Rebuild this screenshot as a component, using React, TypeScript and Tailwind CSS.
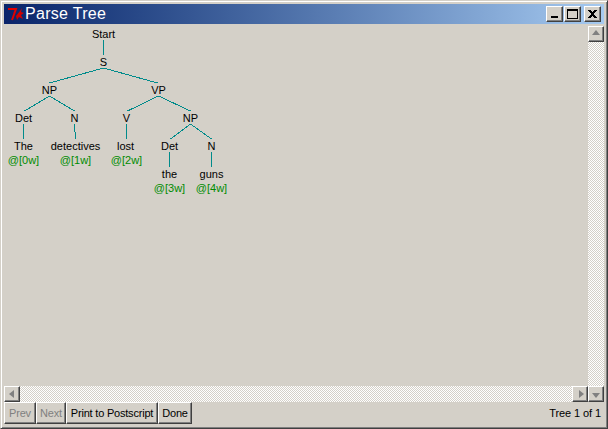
import type { ReactNode } from "react";

const words = [
  { label: "Start", x: 103, y: 34 },
  { label: "S", x: 103, y: 62 },
  { label: "NP", x: 49, y: 90 },
  { label: "VP", x: 158, y: 90 },
  { label: "Det", x: 23, y: 118 },
  { label: "N", x: 74, y: 118 },
  { label: "V", x: 126, y: 118 },
  { label: "NP", x: 190, y: 118 },
  { label: "The", x: 23, y: 146 },
  { label: "detectives", x: 75, y: 146 },
  { label: "lost", x: 125, y: 146 },
  { label: "Det", x: 169, y: 146 },
  { label: "N", x: 211, y: 146 },
  { label: "the", x: 169, y: 174 },
  { label: "guns", x: 211, y: 174 },
];

const positions = [
  { label: "@[0w]", x: 23, y: 160 },
  { label: "@[1w]", x: 75, y: 160 },
  { label: "@[2w]", x: 126, y: 160 },
  { label: "@[3w]", x: 169, y: 188 },
  { label: "@[4w]", x: 211, y: 188 },
];

const edges = [
  [103, 40, 103, 55],
  [103, 68, 49, 83],
  [103, 68, 157, 83],
  [49, 96, 24, 111],
  [49, 96, 74, 111],
  [158, 96, 127, 111],
  [158, 96, 190, 111],
  [23, 124, 23, 139],
  [74, 124, 75, 139],
  [126, 124, 126, 139],
  [190, 124, 170, 139],
  [190, 124, 211, 139],
  [169, 152, 169, 167],
  [211, 152, 211, 167],
];

const raised =
  "border border-t-white border-l-white border-r-[#404040] border-b-[#404040] bg-[#d4d0c8] shadow-[inset_-1px_-1px_0_#808080]";

const checker =
  "bg-[repeating-conic-gradient(#ffffff_0_25%,#d4d0c8_0_50%)] bg-[length:2px_2px]";

function TitleButton({ children, className }: { children: ReactNode; className?: string }) {
  return (
    <div className={`flex h-4 w-[17px] items-center justify-center ${raised} ${className ?? ""}`}>
      <svg width="15" height="14" viewBox="0 0 15 14" shapeRendering="crispEdges">
        {children}
      </svg>
    </div>
  );
}

function ScrollButton({ dir }: { dir: "up" | "down" | "left" | "right" }) {
  const points = {
    up: "7,3 11,8 3,8",
    down: "3,6 11,6 7,11",
    left: "9,3 9,11 4,7",
    right: "6,3 6,11 11,7",
  }[dir];
  return (
    <div className={`flex h-4 w-4 shrink-0 items-center justify-center ${raised}`}>
      <svg width="14" height="14" viewBox="0 0 14 14">
        <polygon points={points} fill="#808080" />
      </svg>
    </div>
  );
}

function ActionButton({ label, disabled, width }: { label: string; disabled?: boolean; width: string }) {
  return (
    <div
      className={`flex h-[22px] items-center justify-center text-[11px] tracking-[-0.2px] ${width} ${raised} ${
        disabled ? "text-[#808080]" : "text-black"
      }`}
    >
      {label}
    </div>
  );
}

function TreeCanvas() {
  return (
    <div className="relative min-w-0 flex-1 overflow-hidden">
      {/* offsets below are page coordinates, canvas starts at 4,24 */}
      <svg className="absolute left-[-4px] top-[-24px]" width="608" height="429">
        {edges.map(([x1, y1, x2, y2], i) => (
          <line
            key={i}
            x1={x1 + 0.5}
            y1={y1}
            x2={x2 + 0.5}
            y2={y2}
            stroke="#008b8b"
            strokeWidth="1"
            shapeRendering="crispEdges"
          />
        ))}
      </svg>
      {words.map((w, i) => (
        <span
          key={i}
          className="absolute -translate-x-1/2 -translate-y-1/2 whitespace-nowrap text-[11px] leading-[14px] text-black"
          style={{ left: w.x - 4 + 0.5, top: w.y - 24 }}
        >
          {w.label}
        </span>
      ))}
      {positions.map((p) => (
        <span
          key={p.label}
          className="absolute -translate-x-1/2 -translate-y-1/2 whitespace-nowrap text-[11px] leading-[14px] text-[#008b00]"
          style={{ left: p.x - 4 + 0.5, top: p.y - 24 }}
        >
          {p.label}
        </span>
      ))}
    </div>
  );
}

export default function App() {
  return (
    <div className="h-[429px] w-[608px] overflow-hidden font-['Liberation_Sans',Arial,sans-serif]">
      <div className="flex h-full w-full flex-col border border-t-[#d4d0c8] border-l-[#d4d0c8] border-r-[#404040] border-b-[#404040] bg-[#d4d0c8] p-[3px] shadow-[inset_1px_1px_0_#ffffff,inset_-1px_-1px_0_#808080]">
        <div className="flex h-5 shrink-0 items-center bg-gradient-to-r from-[#0a246a] to-[#a6caf0] pl-[3px] pr-[3px]">
          <svg width="18" height="14" viewBox="0 0 18 14">
            <path d="M1 2 H9 L5 13 M9 2 L7 7" fill="none" stroke="#e00000" strokeWidth="2" />
            <path d="M9 9 L13 4 L15 1 L14 5 L17 6 L14 8 L16 12 L12 10 L10 13 Z" fill="#d00000" />
          </svg>
          <span className="text-[16px] leading-5 tracking-[0.3px] text-white">Parse Tree</span>
          <div className="ml-auto flex items-center">
            <TitleButton className="mr-[1px]">
              <rect x="4" y="9" width="7" height="2" fill="#000" />
            </TitleButton>
            <TitleButton className="mr-[3px]">
              <path d="M2 2 H13 V12 H2 Z M3 4 V11 H12 V4 Z" fill="#000" fillRule="evenodd" />
            </TitleButton>
            <TitleButton>
              <path d="M3 3 H5.5 L7.5 5.5 L9.5 3 H12 L9 7 L12 11 H9.5 L7.5 8.5 L5.5 11 H3 L6 7 Z" fill="#000" />
            </TitleButton>
          </div>
        </div>

        <div className="flex min-h-0 flex-1">
          <div className="flex min-w-0 flex-1 flex-col">
            <TreeCanvas />
            <div className="flex h-4 shrink-0">
              <ScrollButton dir="left" />
              <div className={`flex-1 ${checker}`} />
              <ScrollButton dir="right" />
            </div>
          </div>
          <div className="mt-[2px] flex w-4 shrink-0 flex-col">
            <ScrollButton dir="up" />
            <div className={`flex-1 ${checker}`} />
            <ScrollButton dir="down" />
          </div>
        </div>

        <div className="mb-[1px] flex h-[22px] shrink-0 items-center">
          <ActionButton label="Prev" disabled width="w-8" />
          <ActionButton label="Next" disabled width="w-[30px]" />
          <ActionButton label="Print to Postscript" width="w-[92px]" />
          <ActionButton label="Done" width="w-[34px]" />
          <span className="ml-auto pr-[3px] text-[11px] tracking-[-0.1px] text-black">Tree 1 of 1</span>
        </div>
      </div>
    </div>
  );
}
